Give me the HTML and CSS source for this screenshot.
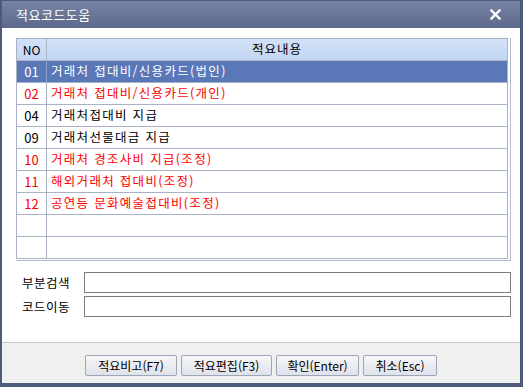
FILE: index.html
```html
<!DOCTYPE html>
<html lang="ko">
<head>
<meta charset="utf-8">
<link rel="stylesheet" href="styles.css">
</head>
<body>
<div class="window">
  <div class="titlebar">
    <span class="title">적요코드도움</span>
    <svg class="close" width="11" height="11" viewBox="0 0 11 11"><path d="M1.5 1.5 L9.5 9.5 M9.5 1.5 L1.5 9.5" stroke="#fff" stroke-width="2.4" stroke-linecap="square"/></svg>
  </div>
  <div class="content">
    <div class="grid-wrap">
      <div class="grid">
        <div class="row head"><div class="c1">NO</div><div class="c2 center">적요내용</div></div>
        <div class="row sel"><div class="c1">01</div><div class="c2">거래처 접대비/신용카드(법인)</div></div>
        <div class="row red"><div class="c1">02</div><div class="c2">거래처 접대비/신용카드(개인)</div></div>
        <div class="row"><div class="c1">04</div><div class="c2">거래처접대비 지급</div></div>
        <div class="row"><div class="c1">09</div><div class="c2">거래처선물대금 지급</div></div>
        <div class="row red"><div class="c1">10</div><div class="c2">거래처 경조사비 지급(조정)</div></div>
        <div class="row red"><div class="c1">11</div><div class="c2">해외거래처 접대비(조정)</div></div>
        <div class="row red"><div class="c1">12</div><div class="c2">공연등 문화예술접대비(조정)</div></div>
        <div class="row"><div class="c1"></div><div class="c2"></div></div>
        <div class="row last"><div class="c1"></div><div class="c2"></div></div>
      </div>
    </div>
    <div class="fields">
      <div class="field"><span class="label">부분검색</span><div class="input"></div></div>
      <div class="field"><span class="label">코드이동</span><div class="input"></div></div>
    </div>
  </div>
  <div class="footer">
    <button class="btn w1">적요비고(F7)</button>
    <button class="btn w2">적요편집(F3)</button>
    <button class="btn w3">확인(Enter)</button>
    <button class="btn w4">취소(Esc)</button>
  </div>
</div>
</body>
</html>
```
FILE: styles.css
```css
html, body { margin: 0; padding: 0; }
body {
  width: 523px; height: 387px; overflow: hidden;
  font-family: "Noto Sans CJK KR", "Noto Sans", sans-serif;
  font-size: 12px;
}
.window {
  width: 523px; height: 387px; box-sizing: border-box;
  background: #4c5a7c;
  padding: 0 3px 4px 2px;
  display: flex; flex-direction: column;
}
.titlebar {
  height: 28px; box-sizing: border-box;
  border-top: 1px solid #4c5a7c;
  background: linear-gradient(#7884a4, #5d698c);
  display: flex; align-items: center; justify-content: space-between;
  padding: 0 19px 0 14px;
  color: #fff;
}
.title { font-size: 13px; letter-spacing: 0.5px; }
.close { display: block; }
.content {
  background: #fff; height: 314px; box-sizing: border-box;
  padding: 10px 9px 0 14px;
}
.grid-wrap {
  border: 1px solid #b1b8ca;
  border-left: 0; border-top: 0;
  padding: 0 2px 1px 0;
  width: 495px; box-sizing: border-box;
}
.grid {
  border: 1px solid #a9b1c5;
}
.row { display: flex; height: 22px; box-sizing: border-box; border-bottom: 1px solid #aab2c6; color: #000; }
.row.last { border-bottom: 0; height: 21px; }
.row > div { display: flex; align-items: center; line-height: 1; }
.c1 { width: 29px; border-right: 1px solid #aab2c6; justify-content: center; font-size: 13px; }
.c2 { flex: 1; padding-left: 4px; letter-spacing: 1.3px; font-size: 12.5px; }
.c2.center { justify-content: center; padding-left: 0; }
.head { background: linear-gradient(#d2e1f7, #c3d6f3); height: 22px; }
.head .c1 { font-size: 12px; }
.head .c2 { font-size: 12.5px; letter-spacing: 1px; }
.sel { background: #5a77b8; color: #fff; }
.sel .c1 { border-right-color: #8ea2cf; }
.red { color: #f00; }
.fields { padding-top: 11px; padding-left: 6px; display: flex; flex-direction: column; gap: 3px; }
.field { display: flex; align-items: center; }
.label { width: 62px; font-size: 12.5px; letter-spacing: 0.5px; }
.input { width: 425px; height: 19px; border: 1px solid #7c7c7c; background: #fff; }
.footer {
  flex: 1; background: #f0f0ee; border-top: 1px solid #c6c6ca;
  display: flex; justify-content: center; align-items: flex-start;
  padding-top: 12px; gap: 4px;
}
.btn {
  height: 21px; box-sizing: border-box; padding: 0;
  font-family: "Noto Sans CJK KR", "Noto Sans", sans-serif; font-size: 12px;
  border: 1px solid #9ca5ba; border-radius: 2px;
  background: linear-gradient(#f6f6f8, #dfe2ea);
  color: #000; line-height: 1;
}
.w1 { width: 92px; }
.w2 { width: 91px; }
.w3 { width: 83px; }
.w4 { width: 74px; }
```
